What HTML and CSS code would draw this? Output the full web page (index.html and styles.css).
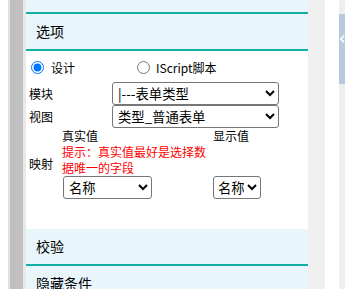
FILE: index.html
```html
<!DOCTYPE html>
<html lang="zh">
<head>
<meta charset="utf-8">
<link rel="stylesheet" href="styles.css">
</head>
<body>
<div class="page">
  <div class="gutter"></div>
  <div class="rail"></div>
  <div class="panel">
    <div class="sec-head sec-prev">基本</div>
    <div class="sec-head">选项</div>
    <div class="sec-body">
      <div class="radio-row">
        <label class="radio-item"><input type="radio" name="mode" checked><span>设计</span></label>
        <label class="radio-item second"><input type="radio" name="mode"><span>IScript脚本</span></label>
      </div>
      <div class="field-row">
        <span class="field-label">模块</span>
        <select class="sel sel-wide"><option>|---表单类型</option></select>
      </div>
      <div class="field-row">
        <span class="field-label">视图</span>
        <select class="sel sel-wide"><option>类型_普通表单</option></select>
      </div>
      <div class="map-row">
        <span class="map-label">映射</span>
        <div class="map-grid">
          <div class="map-head">真实值</div>
          <div class="map-head">显示值</div>
          <div class="map-tip">提示：真实值最好是选择数据唯一的字段</div>
          <div class="map-cell"><select class="sel sel-real"><option>名称</option></select></div>
          <div class="map-cell"><select class="sel sel-show"><option>名称</option></select></div>
        </div>
      </div>
    </div>
    <div class="sec-head">校验</div>
    <div class="sec-head">隐藏条件</div>
  </div>
  <div class="side"></div>
  <div class="gap"></div>
  <div class="edge"><div class="edge-btn"><svg width="6" height="10" viewBox="0 0 6 10"><path d="M5 1 L1 5 L5 9" fill="none" stroke="#ffffff" stroke-width="2"/></svg></div></div>
</div>
</body>
</html>
```

FILE: styles.css
```css
html, body {
  margin: 0;
  padding: 0;
  background: #ffffff;
}
body {
  font-family: "Noto Sans CJK SC", "Open Sans", sans-serif;
  font-size: 12px;
  color: #000000;
}
.page {
  display: flex;
  width: 345px;
  height: 289px;
  overflow: hidden;
}
.gutter {
  width: 8px;
  flex: none;
  background: #ffffff;
}
.rail {
  width: 13px;
  flex: none;
  background: #c0c0c0;
  border-left: 2px solid #e2e2e2;
  border-right: 3px solid #e9e9e9;
}
.panel {
  width: 282px;
  flex: none;
  display: flex;
  flex-direction: column;
  background: #ffffff;
}
.sec-head {
  flex: none;
  height: 35px;
  line-height: 35px;
  padding-left: 10px;
  font-size: 14px;
  background: #e8f6fb;
  border-bottom: 2px solid #12b0a4;
}
.sec-prev {
  margin-top: -23px;
  line-height: 28px;
}
.sec-body {
  height: 178px;
  flex: none;
  padding-top: 8px;
  box-sizing: border-box;
}
.radio-row {
  display: flex;
  align-items: center;
  height: 16px;
  margin-bottom: 7px;
}
.radio-item {
  display: flex;
  align-items: center;
  gap: 7px;
}
.radio-item input {
  margin: 0 0 0 5px;
  width: 13px;
  height: 13px;
}
.radio-item.second {
  margin-left: 57px;
  gap: 6px;
}
.field-row {
  display: flex;
  align-items: center;
  height: 23px;
}
.field-label {
  width: 83px;
  padding-left: 3px;
  flex: none;
}
.sel {
  font-family: "Noto Sans CJK SC", "Open Sans", sans-serif;
  font-size: 13.33px;
  height: 23px;
  padding: 0 1px;
  border: 1px solid #767676;
  border-radius: 3px;
  background: #ffffff;
  color: #000000;
  box-sizing: border-box;
}
.sel-wide {
  width: 167px;
}
.map-row {
  display: flex;
  align-items: center;
}
.map-label {
  width: 33px;
  padding-left: 3px;
  flex: none;
}
.map-grid {
  display: grid;
  grid-template-columns: 151px auto;
}
.map-head {
  line-height: 16px;
}
.map-tip {
  grid-column: 1 / 3;
  width: 150px;
  color: #ff0000;
  line-height: 16px;
}
.map-cell {
  height: 23px;
}
.sel-real {
  margin-left: 1px;
  width: 89px;
}
.sel-show {
  width: 48px;
  padding: 0;
}
.side {
  width: 17px;
  flex: none;
  background: #f0f0f0;
}
.gap {
  width: 14px;
  flex: none;
  background: #ffffff;
}
.edge {
  width: 6px;
  flex: none;
  background: #eeeeee;
}
.edge-btn {
  margin-top: 14px;
  height: 70px;
  background: #b9c9dd;
  display: flex;
  align-items: flex-start;
  padding-top: 20px;
  box-sizing: border-box;
  padding-left: 1px;
}
```
